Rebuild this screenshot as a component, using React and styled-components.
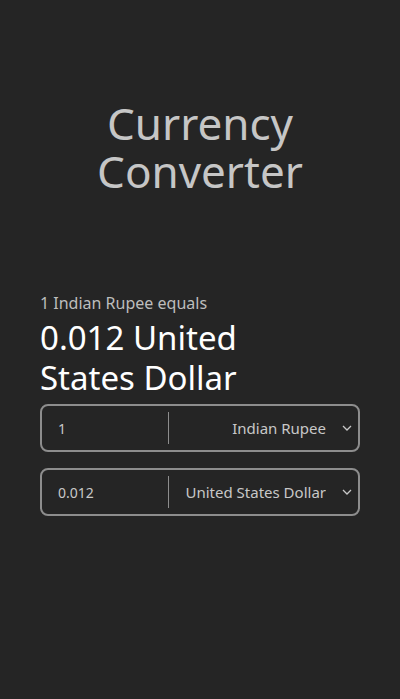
import React, {useState} from 'react'
import styled, {createGlobalStyle} from 'styled-components'

const rates = {
  'Indian Rupee': 1,
  'United States Dollar': 0.012
}

export default function App () {
  const [amount] = useState('1')
  const [from, setFrom] = useState('Indian Rupee')
  const [to, setTo] = useState('United States Dollar')
  const converted = (Number(amount) * rates[to] / rates[from]).toString()

  return (
    <Page>
      <Global />
      <Title>Currency<br />Converter</Title>
      <Summary>
        <Equals>1 {from} equals</Equals>
        <Result>{converted} {to}</Result>
      </Summary>
      <Row>
        <Amount defaultValue={amount} />
        <Divider />
        <Select value={from} onChange={e => setFrom(e.target.value)}>
          {Object.keys(rates).map(k => <option key={k}>{k}</option>)}
        </Select>
      </Row>
      <Row>
        <Amount value={converted} readOnly />
        <Divider />
        <Select value={to} onChange={e => setTo(e.target.value)}>
          {Object.keys(rates).map(k => <option key={k}>{k}</option>)}
        </Select>
      </Row>
    </Page>
  )
}

const Global = createGlobalStyle`
  html, body {margin: 0; background: #252525;}
  body {font-family: "Noto Sans", "Open Sans", sans-serif;}
`

const Page = styled.div`
  min-height: 699px;
  box-sizing: border-box;
  padding: 0 40px;
  display: flex;
  flex-direction: column;
`

const Title = styled.h1`
  margin: 99px 0 0;
  font-size: 44px;
  line-height: 48px;
  font-weight: 400;
  text-align: center;
  color: #c6c6c6;
`

const Summary = styled.div`
  margin-top: 97px;
  margin-bottom: 6px;
`

const Equals = styled.div`
  font-size: 16px;
  line-height: 22px;
  color: #bdbdbd;
`

const Result = styled.div`
  margin-top: 4px;
  max-width: 250px;
  font-size: 33px;
  line-height: 40px;
  color: #ffffff;
`

const Row = styled.div`
  display: flex;
  align-items: center;
  height: 48px;
  box-sizing: border-box;
  margin-bottom: 16px;
  border: 2px solid #8d8d8d;
  border-radius: 8px;
  padding: 6px 0;
`

const Amount = styled.input`
  width: 126px;
  box-sizing: border-box;
  padding: 0 16px;
  background: transparent;
  border: none;
  outline: none;
  font: inherit;
  font-size: 14px;
  color: #c8c8c8;
`

const Divider = styled.div`
  align-self: stretch;
  width: 1px;
  background: #8d8d8d;
`

const Select = styled.select`
  flex: 1;
  height: 100%;
  appearance: none;
  background: transparent url("data:image/svg+xml,%3Csvg xmlns='http://www.w3.org/2000/svg' width='10' height='6'%3E%3Cpath d='M1 1l4 4 4-4' stroke='%23c8c8c8' stroke-width='1.3' fill='none'/%3E%3C/svg%3E") no-repeat right 6px center;
  border: none;
  outline: none;
  font: inherit;
  font-size: 15px;
  color: #c8c8c8;
  text-align: right;
  text-align-last: right;
  padding: 0 32px 0 8px;
`
